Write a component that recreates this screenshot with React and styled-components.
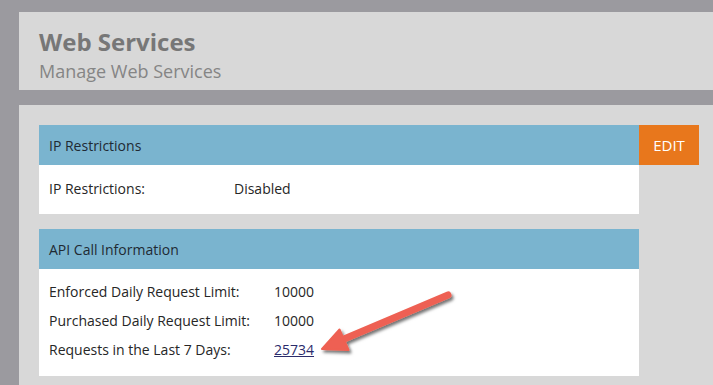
import styled, { createGlobalStyle } from "styled-components";

const GlobalStyle = createGlobalStyle`
  html, body {
    margin: 0;
    padding: 0;
    background: #9b9a9f;
    font-family: "Open Sans", "Liberation Sans", sans-serif;
  }
  #root {
    height: 385px;
    overflow: hidden;
  }
`;

const Page = styled.div`
  padding: 12px 0 0 19px;
`;

const HeaderPanel = styled.div`
  background: #d8d8d8;
  height: 78px;
  box-sizing: border-box;
  padding: 15px 20px 0;
`;

const Title = styled.h1`
  margin: 0;
  font-size: 24px;
  font-weight: 700;
  line-height: 30px;
  color: #777;
`;

const Subtitle = styled.div`
  margin-top: 2px;
  font-size: 18px;
  line-height: 24px;
  color: #858585;
`;

const ContentPanel = styled.div`
  position: relative;
  margin-top: 15px;
  background: #d8d8d8;
  padding: 20px 20px 10px;
  display: flex;
  flex-direction: column;
  gap: 15px;
`;

const CardRow = styled.div`
  display: flex;
  align-items: flex-start;
`;

const Card = styled.div`
  width: 600px;
  flex-shrink: 0;
`;

const CardHeader = styled.div`
  background: #7ab4cf;
  height: 40px;
  padding: 0 10px;
  display: flex;
  align-items: center;
  font-size: 14px;
  color: #1f2a33;
`;

const CardBody = styled.div`
  background: #fff;
  padding: ${(p) => p.$pad};
`;

const Row = styled.div`
  display: grid;
  grid-template-columns: ${(p) => p.$label}px auto;
  height: 29px;
  align-items: center;
  font-size: 14px;
  color: #262626;
`;

const Link = styled.a`
  color: #2b2b6b;
  text-decoration: underline;
  justify-self: start;
`;

const EditButton = styled.button`
  flex-shrink: 0;
  width: 60px;
  height: 40px;
  border: 0;
  background: #e8771c;
  color: #fff;
  font-family: inherit;
  font-size: 15px;
  padding: 0;
  cursor: pointer;
`;

const Arrow = styled.svg`
  position: absolute;
  left: 291px;
  top: 175px;
  pointer-events: none;
`;

const App = () => (
  <>
    <GlobalStyle />
    <Page>
      <HeaderPanel>
        <Title>Web Services</Title>
        <Subtitle>Manage Web Services</Subtitle>
      </HeaderPanel>
      <ContentPanel>
        <CardRow>
          <Card>
            <CardHeader>IP Restrictions</CardHeader>
            <CardBody $pad="9px 10px 11px">
              <Row $label={185}>
                <span>IP Restrictions:</span>
                <span>Disabled</span>
              </Row>
            </CardBody>
          </Card>
          <EditButton>EDIT</EditButton>
        </CardRow>
        <Card>
          <CardHeader>API Call Information</CardHeader>
          <CardBody $pad="8px 10px 12px">
            <Row $label={225}>
              <span>Enforced Daily Request Limit:</span>
              <span>10000</span>
            </Row>
            <Row $label={225}>
              <span>Purchased Daily Request Limit:</span>
              <span>10000</span>
            </Row>
            <Row $label={225}>
              <span>Requests in the Last 7 Days:</span>
              <Link href="#">25734</Link>
            </Row>
          </CardBody>
        </Card>
        <Arrow width="160" height="90" viewBox="0 0 160 90">
          <defs>
            <filter id="sh" x="-20%" y="-20%" width="140%" height="140%">
              <feDropShadow dx="2" dy="2.5" stdDeviation="1.5" floodColor="#000" floodOpacity="0.55" />
            </filter>
          </defs>
          <g filter="url(#sh)" fill="#ee6152" stroke="#ee6152">
            <line x1="138" y1="15" x2="34" y2="59" strokeWidth="7" strokeLinecap="round" />
            <polygon points="12,69 29.5,49.5 38.5,70" strokeWidth="2" strokeLinejoin="round" />
          </g>
        </Arrow>
      </ContentPanel>
    </Page>
  </>
);

export default App;
